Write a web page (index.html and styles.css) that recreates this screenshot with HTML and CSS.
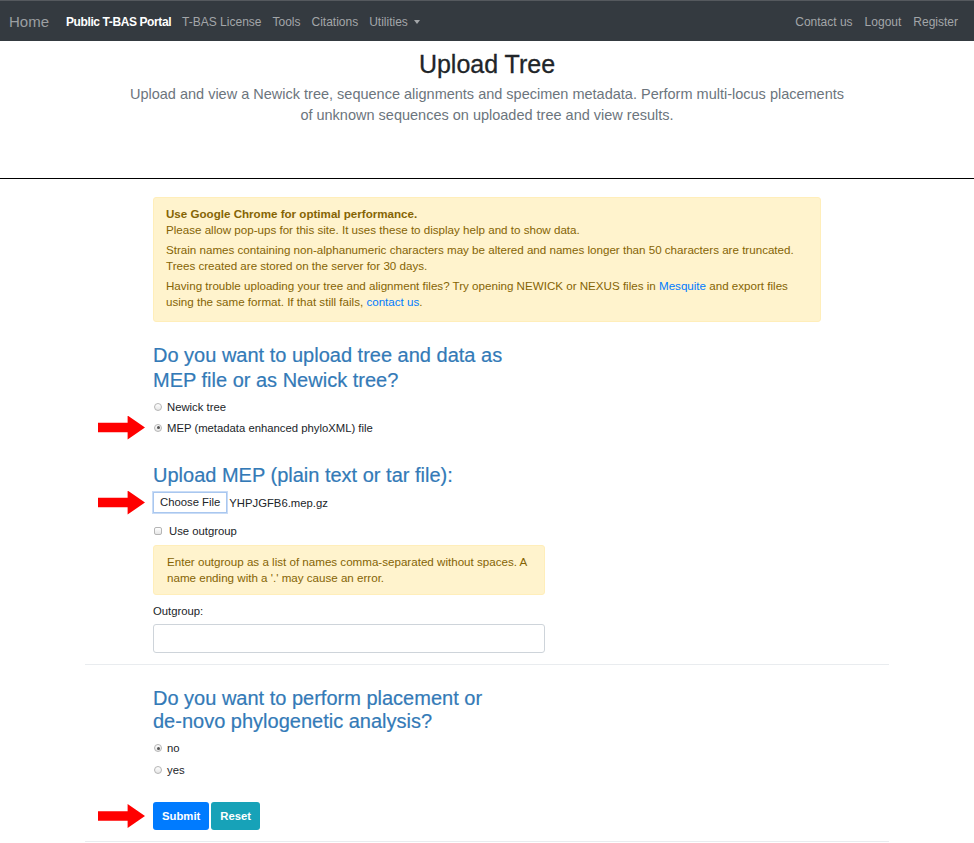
FILE: index.html
```html
<!DOCTYPE html>
<html>
<head>
<meta charset="utf-8">
<link rel="stylesheet" href="styles.css">
</head>
<body>
<nav class="navbar">
  <a class="brand">Home</a>
  <ul class="nav-left">
    <li class="active">Public T-BAS Portal</li>
    <li>T-BAS License</li>
    <li>Tools</li>
    <li>Citations</li>
    <li class="dropdown">Utilities <span class="caret"></span></li>
  </ul>
  <ul class="nav-right">
    <li>Contact us</li>
    <li>Logout</li>
    <li>Register</li>
  </ul>
</nav>
<header class="hero">
  <h1>Upload Tree</h1>
  <p>Upload and view a Newick tree, sequence alignments and specimen metadata. Perform multi-locus placements of unknown sequences on uploaded tree and view results.</p>
</header>
<hr class="black-rule">
<main class="container">
  <div class="inner">
    <div class="alert alert-big">
      <p><strong>Use Google Chrome for optimal performance.</strong><br>Please allow pop-ups for this site. It uses these to display help and to show data.</p>
      <p>Strain names containing non-alphanumeric characters may be altered and names longer than 50 characters are truncated. Trees created are stored on the server for 30 days.</p>
      <p>Having trouble uploading your tree and alignment files? Try opening NEWICK or NEXUS files in <span class="link">Mesquite</span> and export files using the same format. If that still fails, <span class="link">contact us</span>.</p>
    </div>

    <h2 class="q">Do you want to upload tree and data as<br>MEP file or as Newick tree?</h2>
    <div class="radio-row"><span class="radio"></span>Newick tree</div>
    <div class="radio-row marked"><span class="arrow"></span><span class="radio checked"></span>MEP (metadata enhanced phyloXML) file</div>

    <h2 class="q q-upload">Upload MEP (plain text or tar file):</h2>
    <div class="file-row marked"><span class="arrow"></span><span class="file-btn">Choose File</span><span class="file-name">YHPJGFB6.mep.gz</span></div>
    <div class="check-row"><span class="checkbox"></span>Use outgroup</div>
    <div class="alert alert-small">Enter outgroup as a list of names comma-separated without spaces. A name ending with a '.' may cause an error.</div>
    <label class="field-label">Outgroup:</label>
    <div class="text-input"></div>
  </div>
  <hr class="light-rule">
  <div class="inner">
    <h2 class="q q-third">Do you want to perform placement or<br>de-novo phylogenetic analysis?</h2>
    <div class="radio-row small"><span class="radio checked"></span>no</div>
    <div class="radio-row small"><span class="radio"></span>yes</div>
    <div class="buttons marked"><span class="arrow"></span><span class="btn btn-primary">Submit</span><span class="btn btn-info">Reset</span></div>
  </div>
  <hr class="light-rule bottom">
</main>
</body>
</html>
```

FILE: styles.css
```css
* { box-sizing: border-box; }
body {
  margin: 0;
  font-family: "Liberation Sans", Arial, sans-serif;
  color: #212529;
  background: #fff;
}
.navbar {
  height: 41px;
  background: #343a40;
  border-top: 1px solid #55595e;
  display: flex;
  align-items: center;
  padding: 1px 9px 0;
  font-size: 12px;
}
.brand {
  color: #9c9fa2;
  font-size: 15px;
  margin-right: 17px;
}
.nav-left, .nav-right {
  list-style: none;
  margin: 0;
  padding: 0;
  display: flex;
  gap: 11px;
  color: #a3a6a9;
}
.nav-left .active { color: #fff; font-weight: bold; letter-spacing: -0.4px; }
.nav-right { margin-left: auto; gap: 12px; margin-right: 7px; }
.caret {
  display: inline-block;
  width: 0; height: 0;
  border-left: 3.5px solid transparent;
  border-right: 3.5px solid transparent;
  border-top: 4px solid #a3a6a9;
  vertical-align: 2px;
  margin-left: 3px;
}
.hero {
  text-align: center;
  padding-top: 9px;
  height: 137px;
}
.hero h1 {
  margin: 0;
  font-size: 25px;
  font-weight: normal;
  line-height: 28px;
  color: #212529;
  -webkit-text-stroke: 0.3px #212529;
}
.hero p {
  margin: 6px auto 0;
  width: 722px;
  font-size: 14.5px;
  line-height: 21px;
  color: #6c757d;
}
.black-rule {
  margin: 0;
  border: 0;
  border-top: 1px solid #000;
}
.container {
  width: 804px;
  margin: 0 auto;
}
.inner { padding: 0 68px; }
.alert {
  background: #fff3cd;
  border: 1px solid #ffeeba;
  color: #856404;
  border-radius: 3px;
  font-size: 11.6px;
  line-height: 16px;
}
.alert-big {
  margin-top: 18px;
  padding: 8px 12px 7px;
}
.alert-big p { margin: 0 0 4px; }
.link { color: #007bff; }
.q {
  color: #337ab7;
  font-weight: normal;
  font-size: 20px;
  line-height: 25px;
  margin: 21px 0 3px;
  -webkit-text-stroke: 0.2px #337ab7;
}
.radio-row, .check-row {
  position: relative;
  display: flex;
  align-items: center;
  font-size: 11.3px;
  height: 21px;
  color: #212529;
}
.radio {
  width: 8px; height: 8px;
  border-radius: 50%;
  border: 1px solid #b5b5b5;
  background: linear-gradient(#fff, #e6e6e6);
  margin: 0 5px 0 1px;
  position: relative;
}
.radio.checked::after {
  content: "";
  position: absolute;
  left: 1.5px; top: 1.5px;
  width: 3px; height: 3px;
  border-radius: 50%;
  background: #555;
}
.arrow {
  position: absolute;
  left: -55px;
  top: 50%;
  width: 47px;
  height: 24px;
  margin-top: -12px;
  background: #f00;
  clip-path: polygon(0 30%, 63% 30%, 63% 0, 100% 50%, 63% 100%, 63% 70%, 0 70%);
}
.q-upload { margin: 25px 0 4px; }
.file-row {
  position: relative;
  display: flex;
  align-items: center;
  font-size: 11.3px;
  height: 21px;
}
.file-btn {
  border: 1px solid #a9c7ef;
  box-shadow: 0 0 0 1px #c9dcf6;
  background: #fff;
  padding: 3px 6px;
  line-height: 13px;
  margin-right: 2px;
}
.check-row { margin-top: 7px; }
.checkbox {
  width: 8px; height: 8px;
  border: 1px solid #b5b5b5;
  border-radius: 2px;
  background: linear-gradient(#fff, #e6e6e6);
  margin: 0 7px 0 1px;
}
.alert-small {
  width: 392px;
  margin-top: 4px;
  padding: 8px 13px 8px 13px;
}
.field-label {
  display: block;
  font-size: 11.3px;
  margin-top: 9px;
  line-height: 14px;
}
.text-input {
  width: 392px;
  height: 29px;
  border: 1px solid #ced4da;
  border-radius: 3px;
  margin-top: 6px;
}
.light-rule {
  margin: 11px 0 0;
  border: 0;
  border-top: 1px solid #e9ecef;
}
.q-third { margin: 22px 0 4px; line-height: 23px; }
.radio-row.small { height: 22px; }
.buttons {
  position: relative;
  display: flex;
  gap: 2px;
  margin-top: 21px;
}
.btn {
  color: #fff;
  font-size: 11.3px;
  font-weight: bold;
  height: 28px;
  line-height: 28px;
  padding: 0 9px;
  border-radius: 3px;
}
.btn-primary { background: #007bff; }
.btn-info { background: #17a2b8; }
.light-rule.bottom { margin-top: 11px; }
```
